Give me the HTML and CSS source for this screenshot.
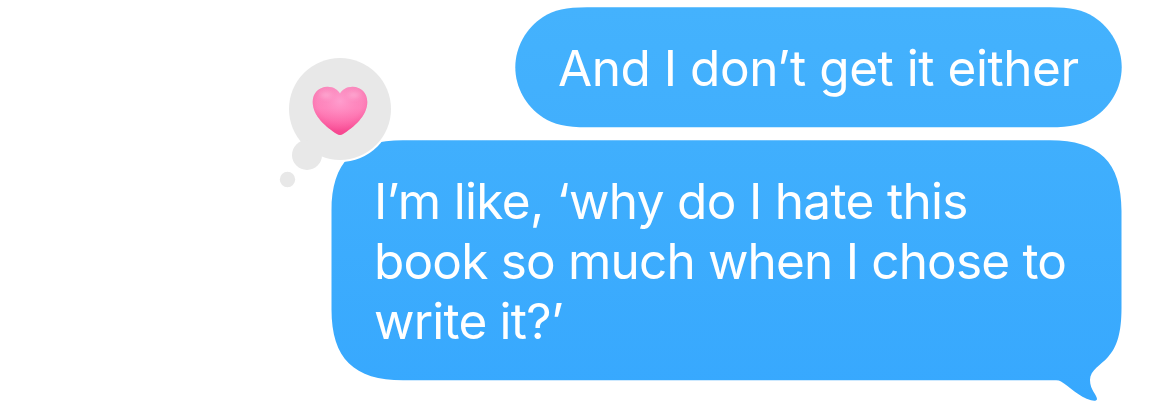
FILE: index.html
```html
<!DOCTYPE html>
<html lang="en">
<head>
  <meta charset="UTF-8" />
  <meta name="viewport" content="width=device-width, initial-scale=1" />
  <title>Messages</title>
  <link rel="stylesheet" href="styles.css">
</head>
<body>
  <main class="chat">

    <div class="bubble bubble-short">
      <svg class="bubble-shape" width="607" height="121" viewBox="0 0 607 121" aria-hidden="true">
        <defs>
          <linearGradient id="blueTop" x1="0" y1="0" x2="0" y2="1">
            <stop offset="0" stop-color="#44b2fd" />
            <stop offset="1" stop-color="#41affd" />
          </linearGradient>
        </defs>
        <path fill="url(#blueTop)" d="M72 0.3H535C556 0.3 568 3 579 10C596 21 606.7 40 606.7 60.3S596 99.500 579 110.500C568 117.500 556 120.300 535 120.300H72C51 120.300 39 117.500 28 110.500C11 99.500 0.300 80.500 0.300 60.300S11 21 28 10C39 3 51 0.300 72 0.300Z" />
      </svg>
      <p class="text"><span class="line line-1">And I don’t get it either</span></p>
    </div>

    <div class="bubble bubble-long">
      <svg class="bubble-shape" width="791" height="262" viewBox="0 0 791 262" aria-hidden="true">
        <defs>
          <linearGradient id="blueBottom" x1="0" y1="0" x2="0" y2="1">
            <stop offset="0" stop-color="#40affd" />
            <stop offset="1" stop-color="#37a8fe" />
          </linearGradient>
        </defs>
        <path fill="url(#blueBottom)" d="M72 0.300H719C768 0.300 790.500 22 790.500 71V168C790.500 193 786 207 777 217C770 225 759 230 759 240C759 250 766 255 766 259C766 261 763 261 760 260.300C748 257 739 247 730 241.500Q728 240.300 725 240.300H72C23 240.300 0.500 218.500 0.500 169.500V71C0.500 22 23 0.300 72 0.300Z" />
      </svg>
      <p class="text">
        <span class="line line-2">I’m like, ‘why do I hate this</span>
        <span class="line line-3">book so much when I chose to</span>
        <span class="line line-4">write it?’</span>
      </p>

      <!-- heart reaction -->
      <svg class="reaction" width="116" height="134" viewBox="0 0 116 134" role="img" aria-label="Heart">
        <defs>
          <linearGradient id="heartFill" x1="0" y1="0" x2="0" y2="1">
            <stop offset="0" stop-color="#f78fc0" />
            <stop offset="0.45" stop-color="#ff85bd" />
            <stop offset="1" stop-color="#fb4490" />
          </linearGradient>
          <radialGradient id="heartShine" cx="0.5" cy="0.3" r="0.62">
            <stop offset="0" stop-color="#ffa3d2" stop-opacity="0.8" />
            <stop offset="0.65" stop-color="#ff80b8" stop-opacity="0.35" />
            <stop offset="1" stop-color="#f3478f" stop-opacity="0.55" />
          </radialGradient>
          <filter id="soft" x="-50%" y="-100%" width="200%" height="300%">
            <feGaussianBlur stdDeviation="2" />
          </filter>
        </defs>
        <circle cx="62" cy="53" r="53" fill="#fff" />
        <circle cx="62" cy="53" r="51" fill="#e8e8e8" />
        <circle cx="29" cy="99" r="15" fill="#e8e8e8" />
        <circle cx="9.500" cy="123.500" r="7.700" fill="#e8e8e8" />
        <g>
          <path fill="url(#heartFill)" d="M62 37.800C60 33.500 55 30.700 49.500 30.700C41 30.700 34.700 37 34.700 46C34.700 60 48 71 59.500 78.300Q62 79.900 64.500 78.300C76 71 89.300 60 89.300 46C89.300 37 83 30.700 74.500 30.700C69 30.700 64 33.500 62 37.800Z" />
          <path fill="url(#heartShine)" d="M62 37.800C60 33.500 55 30.700 49.500 30.700C41 30.700 34.700 37 34.700 46C34.700 60 48 71 59.500 78.300Q62 79.900 64.500 78.300C76 71 89.300 60 89.300 46C89.300 37 83 30.700 74.500 30.700C69 30.700 64 33.500 62 37.800Z" />
          <ellipse cx="48" cy="39" rx="6" ry="3" fill="#ffc0df" opacity="0.5" filter="url(#soft)" />
          <ellipse cx="76" cy="39" rx="6" ry="3" fill="#ffc0df" opacity="0.5" filter="url(#soft)" />
        </g>
      </svg>
    </div>

  </main>
</body>
</html>
```
FILE: styles.css
```css
* {
  box-sizing: border-box;
}

body {
  margin: 0;
  background: #ffffff;
  font-family: Inter, "Liberation Sans", sans-serif;
}

.chat {
  display: flex;
  flex-direction: column;
  align-items: flex-end;
  gap: 12px;
  height: 414px;
  padding: 7px 48px 0 0;
  overflow: hidden;
}

/* Bubbles */
.bubble {
  position: relative;
  flex: none;
  padding: 31px 0 0 43px;
}

.bubble-short {
  width: 607px;
  height: 121px;
}

.bubble-long {
  width: 791px;
  height: 241px;
}

.bubble-shape {
  position: absolute;
  top: 0;
  left: 0;
}

.text {
  position: relative;
  margin: 0;
  color: #ffffff;
  font-size: 49.5px;
  line-height: 60px;
}

.line {
  display: block;
  width: max-content;
  white-space: nowrap;
}

.line-1 {
  letter-spacing: -0.46px;
}

.line-2 {
  letter-spacing: -0.68px;
}

.line-3 {
  letter-spacing: -0.82px;
}

.line-4 {
  letter-spacing: -0.8px;
}

/* Reaction sits over the corner of the bubble */
.reaction {
  position: absolute;
  top: -84px;
  left: -53px;
}
```
